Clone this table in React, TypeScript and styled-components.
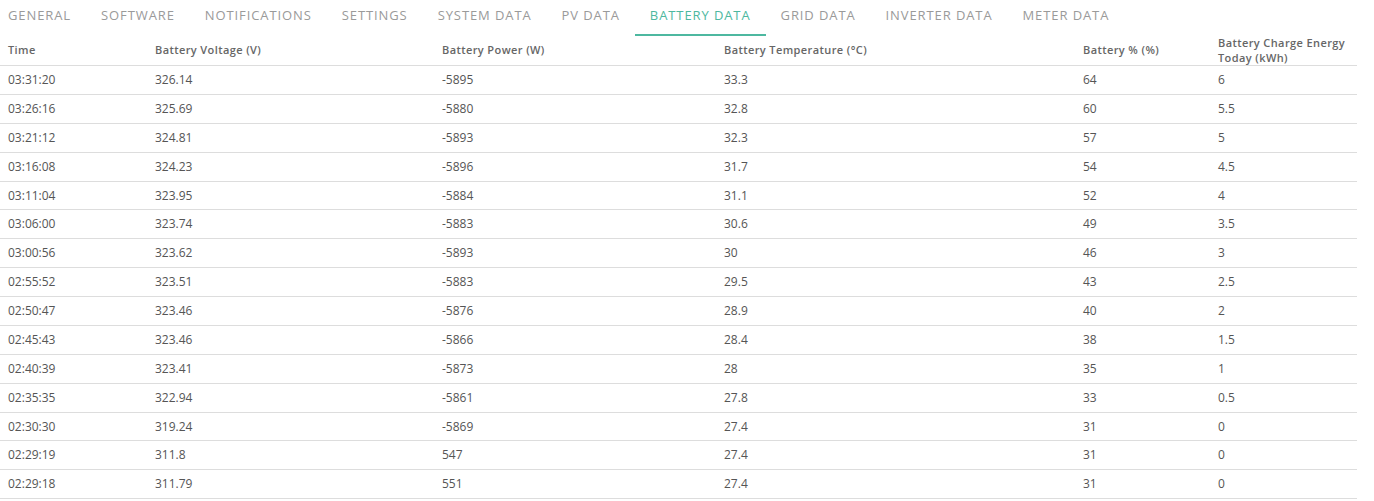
import React from "react";
import styled, { createGlobalStyle } from "styled-components";

const tabs = [
  "General",
  "Software",
  "Notifications",
  "Settings",
  "System Data",
  "PV Data",
  "Battery Data",
  "Grid Data",
  "Inverter Data",
  "Meter Data",
];

const columns = [
  { title: "Time", width: 147 },
  { title: "Battery Voltage (V)", width: 287 },
  { title: "Battery Power (W)", width: 282 },
  { title: "Battery Temperature (°C)", width: 359 },
  { title: "Battery % (%)", width: 135 },
  { title: "Battery Charge Energy Today (kWh)", width: 147 },
];

const rows = [
  ["03:31:20", "326.14", "-5895", "33.3", "64", "6"],
  ["03:26:16", "325.69", "-5880", "32.8", "60", "5.5"],
  ["03:21:12", "324.81", "-5893", "32.3", "57", "5"],
  ["03:16:08", "324.23", "-5896", "31.7", "54", "4.5"],
  ["03:11:04", "323.95", "-5884", "31.1", "52", "4"],
  ["03:06:00", "323.74", "-5883", "30.6", "49", "3.5"],
  ["03:00:56", "323.62", "-5893", "30", "46", "3"],
  ["02:55:52", "323.51", "-5883", "29.5", "43", "2.5"],
  ["02:50:47", "323.46", "-5876", "28.9", "40", "2"],
  ["02:45:43", "323.46", "-5866", "28.4", "38", "1.5"],
  ["02:40:39", "323.41", "-5873", "28", "35", "1"],
  ["02:35:35", "322.94", "-5861", "27.8", "33", "0.5"],
  ["02:30:30", "319.24", "-5869", "27.4", "31", "0"],
  ["02:29:19", "311.8", "547", "27.4", "31", "0"],
  ["02:29:18", "311.79", "551", "27.4", "31", "0"],
];

const App = () => {
  const active = "Battery Data";

  return (
    <>
      <GlobalStyle />
      <Page_div>
        <TabBar_ul>
          {tabs.map((tab) => (
            <Tab_li key={tab} $active={tab === active}>
              {tab}
            </Tab_li>
          ))}
        </TabBar_ul>
        <DataTable_table>
          <colgroup>
            {columns.map((col) => (
              <col key={col.title} width={col.width} />
            ))}
          </colgroup>
          <thead>
            <tr>
              {columns.map((col) => (
                <HeadCell_th key={col.title}>{col.title}</HeadCell_th>
              ))}
            </tr>
          </thead>
          <tbody>
            {rows.map((row, index) => (
              <tr key={index}>
                {row.map((value, i) => (
                  <Cell_td key={i}>{value}</Cell_td>
                ))}
              </tr>
            ))}
          </tbody>
        </DataTable_table>
      </Page_div>
    </>
  );
};

export default App;

const GlobalStyle = createGlobalStyle`
  body {
    margin: 0;
    background: #fff;
    font-family: "Open Sans", "Liberation Sans", sans-serif;
  }
`;

const Page_div = styled.div`
  width: 1357px;
`;

const TabBar_ul = styled.ul`
  display: flex;
  list-style: none;
  margin: 0;
  padding: 0;
  height: 36px;
`;

const Tab_li = styled.li<{ $active: boolean }>`
  box-sizing: border-box;
  height: 36px;
  padding: 6px 15px 10px;
  line-height: 18px;
  font-size: 13px;
  letter-spacing: 0.9px;
  text-transform: uppercase;
  white-space: nowrap;
  color: ${({ $active }) => ($active ? "#4db8a0" : "#9a9a9a")};
  border-bottom: 2px solid ${({ $active }) => ($active ? "#4db8a0" : "transparent")};
  &:first-child {
    padding-left: 8px;
  }
`;

const DataTable_table = styled.table`
  width: 1357px;
  table-layout: fixed;
  border-collapse: collapse;
  border-spacing: 0;
`;

const HeadCell_th = styled.th`
  height: 29px;
  padding: 0 8px;
  font-size: 11px;
  font-weight: 600;
  letter-spacing: 0.4px;
  line-height: 14.5px;
  color: #666;
  text-align: left;
  vertical-align: middle;
  border-bottom: 1px solid #ddd;
`;

const Cell_td = styled.td`
  padding: 4px 8px;
  font-size: 12px;
  line-height: 19.87px;
  color: #555;
  text-align: left;
  border-bottom: 1px solid #ddd;
`;
